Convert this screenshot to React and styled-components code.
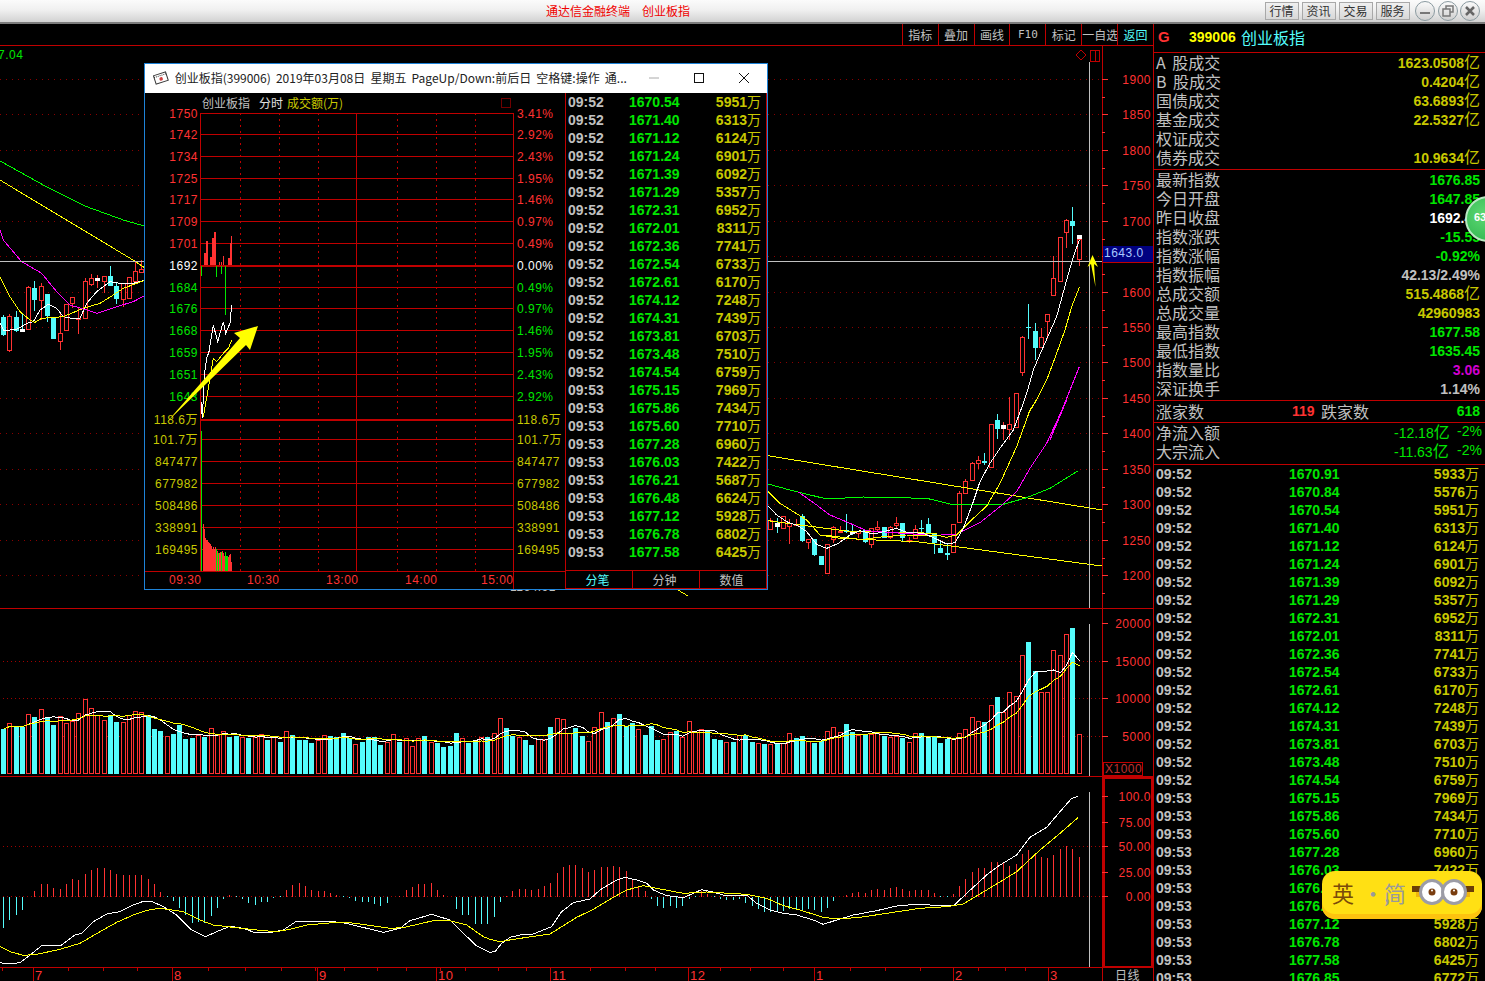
import React from "react";
import styled, { createGlobalStyle } from "styled-components";

const RED = "#FF3232";
const DARKRED = "#C00000";
const CYAN = "#54FCFC";
const GOLD = "#C8C800";
const GREEN = "#00E600";
const GREY = "#C0C0C0";
const CJK = '"Noto Sans CJK SC", "Liberation Sans", sans-serif';
const NUM = '"Liberation Sans", "Noto Sans CJK SC", sans-serif';

const Global = createGlobalStyle`
  html, body { margin: 0; padding: 0; background: #000; overflow: hidden; }
`;

// Page frame
const Shell = styled.div`
  position: relative;
  display: flex;
  flex-direction: column;
  width: 1485px;
  height: 981px;
  overflow: hidden;
  background: #000;
`;
const TitleBar = styled.header`
  display: flex;
  align-items: center;
  box-sizing: border-box;
  height: 24px;
  padding-left: 546px;
  background: linear-gradient(#fbfbfb, #f0f0f0 45%, #d2d2d2);
  border-bottom: 2px solid #7c7c7c;
`;
const AppTitle = styled.span`
  font: 12px ${CJK};
  color: #f00000;
  margin-right: ${(p) => p.$gap || 0}px;
  margin-bottom: 1px;
  white-space: nowrap;
`;
const MenuGroup = styled.div`
  display: flex;
  align-items: center;
  margin-left: auto;
  padding-right: 5px;
`;
const MenuButton = styled.div`
  box-sizing: border-box;
  width: 34px;
  height: 18px;
  margin-right: 3px;
  text-align: center;
  font: 12px/16px ${CJK};
  color: #333;
  background: linear-gradient(#f0f0f0, #d8d8d8);
  border: 1px solid #a8a8a8;
`;
const RoundButton = styled.div`
  display: flex;
  align-items: center;
  justify-content: center;
  box-sizing: border-box;
  width: 20px;
  height: 20px;
  margin-left: 2.5px;
  border-radius: 50%;
  background: linear-gradient(#fafafa, #cfcfcf);
  border: 1px solid #8a9aa0;
`;
const Body = styled.div`
  display: flex;
  flex: 1;
  min-height: 0;
`;
const ChartColumn = styled.main`
  display: flex;
  flex-direction: column;
  width: 1153px;
  flex: none;
`;
const Toolbar = styled.nav`
  display: flex;
  justify-content: flex-end;
  box-sizing: border-box;
  height: 22px;
  border-bottom: 1px solid ${DARKRED};
`;
const ToolButton = styled.div`
  box-sizing: border-box;
  width: 35.9px;
  border-left: 1px solid ${DARKRED};
  text-align: center;
  white-space: nowrap;
  font: ${(p) => (p.$latin ? '11px/21px "DejaVu Sans Mono", monospace' : `12px/21px ${CJK}`)};
  color: ${(p) => (p.$active ? CYAN : GREY)};
`;
const ChartSvg = styled.svg`
  display: block;
  flex: none;
`;
const ChartText = styled.text`
  font: ${(p) => p.$size || 12}px ${NUM};
  fill: ${(p) => p.$color || RED};
  text-anchor: ${(p) => p.$anchor || "start"};
  letter-spacing: 0.5px;
`;

// Right hand quote panel
const Side = styled.aside`
  flex: 1;
  min-width: 0;
  overflow: hidden;
  border-left: 1px solid ${DARKRED};
`;
const SideHead = styled.div`
  display: flex;
  align-items: center;
  box-sizing: border-box;
  height: 29px;
  padding: 0 0 3px 4px;
  border-bottom: 1px solid ${DARKRED};
`;
const HeadMark = styled.span`
  width: 31px;
  font: bold 15px ${NUM};
  color: ${RED};
`;
const HeadCode = styled.span`
  width: 52px;
  font: bold 14px ${NUM};
  color: #ffff00;
`;
const HeadName = styled.span`
  font: 16px ${CJK};
  color: ${CYAN};
`;
const Group = styled.section`
  padding: ${(p) => p.$top ?? 0}px 5px ${(p) => p.$bottom ?? 2}px 2px;
  border-bottom: 1px solid ${DARKRED};
`;
const QuoteRow = styled.div`
  display: flex;
  align-items: center;
  justify-content: space-between;
  height: 19px;
  white-space: nowrap;
`;
const Label = styled.span`
  font: 16px/19px ${CJK};
  color: ${GREY};
  word-spacing: 3px;
`;
const Value = styled.span`
  font: bold 14px/19px ${NUM};
  color: ${(p) => p.$color || GOLD};
`;
const Unit = styled.span`
  font: 400 16px/19px ${CJK};
`;
const CountRow = styled.div`
  display: grid;
  grid-template-columns: 136px 29px 1fr auto;
  align-items: center;
  height: 21px;
  padding-right: 5px;
  padding-left: 2px;
  border-bottom: 1px solid ${DARKRED};
`;
const FlowValue = styled.span`
  display: flex;
  justify-content: space-between;
  width: 88px;
  font: 14px/19px ${NUM};
  color: ${GREEN};
  margin-right: -2px;
`;
const TickRow = styled.div`
  display: grid;
  grid-template-columns: ${(p) => p.$cols};
  align-items: center;
  box-sizing: border-box;
  height: 18px;
  padding-bottom: 1px;
  white-space: nowrap;
  font: bold 14px/17px ${NUM};
`;
const TickTime = styled.span`
  color: ${GREY};
`;
const TickPrice = styled.span`
  color: ${GREEN};
`;
const TickVol = styled.span`
  color: ${GOLD};
  text-align: right;
`;
const TickUnit = styled.span`
  font: 400 14px/17px ${CJK};
`;
const TickList = styled.div`
  padding: 0 ${(p) => p.$right}px 0 ${(p) => p.$left}px;
`;

// Floating minute window
const Popup = styled.div`
  position: absolute;
  left: 144px;
  top: 63px;
  display: flex;
  flex-direction: column;
  box-sizing: border-box;
  width: 624px;
  height: 527px;
  background: #000;
  border: 1px solid #1E83D8;
`;
const PopupTitle = styled.div`
  display: flex;
  align-items: center;
  box-sizing: border-box;
  height: 29px;
  flex: none;
  padding: 0 0 2px 8px;
  background: #fff;
`;
const PopupCaption = styled.span`
  margin-left: 6px;
  width: 467px;
  font: 12px ${CJK};
  word-spacing: 2.5px;
  color: #222;
  white-space: nowrap;
  overflow: hidden;
`;
const PopupControl = styled.div`
  display: flex;
  align-items: center;
  justify-content: center;
  width: 46px;
  height: 27px;
`;
const PopupBody = styled.div`
  display: flex;
  flex: 1;
  min-height: 0;
`;
const PopupSide = styled.div`
  display: flex;
  flex-direction: column;
  flex: 1;
  min-width: 0;
  border-left: 1px solid ${DARKRED};
  border-right: 1px solid ${DARKRED};
  border-bottom: 1px solid ${DARKRED};
`;
const PopupTabs = styled.div`
  display: grid;
  grid-template-columns: 66px 67px 1fr;
  margin-top: auto;
  height: 17px;
  border-top: 1px solid ${DARKRED};
`;
const PopupTab = styled.div`
  box-sizing: border-box;
  padding-right: 3px;
  text-align: center;
  font: 12px/17px ${CJK};
  color: ${(p) => (p.$active ? CYAN : GREY)};
  & + & { border-left: 1px solid ${DARKRED}; }
`;

// Overlays
const Badge = styled.div`
  position: absolute;
  left: 1465px;
  top: 196px;
  box-sizing: border-box;
  width: 46px;
  height: 46px;
  padding: 13px 0 0 7px;
  border-radius: 50%;
  background: radial-gradient(circle at 40% 40%, #5ed873, #28b04a);
  border: 2px solid #b9e8c2;
  font: bold 11px ${NUM};
  color: #fff;
`;
const ImeBar = styled.div`
  position: absolute;
  left: 1322px;
  top: 871px;
  display: flex;
  align-items: center;
  box-sizing: border-box;
  width: 160px;
  height: 48px;
  padding: 0 0 6px 10px;
  border-radius: 13px;
  background: #ffe014;
  box-shadow: inset 0 -5px 0 #fdc30f;
`;
const ImeChar = styled.span`
  flex: none;
  width: ${(p) => p.$width}px;
  font: 22px ${CJK};
  color: ${(p) => p.$color};
`;

/* ---------- chart data, read off the reference ---------- */
const GRID = Array.from({ length: 15 }, (_, i) => Math.round(79 + i * 35.43));
const PRICES = Array.from({ length: 15 }, (_, i) => 1900 - i * 50);
const barLeft = (i) => Math.round(1 + 6.29 * i);

// top of each volume bar; positive = red hollow, negative = cyan solid
const VOL = [
  -387, 370, -380, -380, 343, -351, 328, -352, -375, 349, 370, 362, 340, 297, 325, 345, 361, -345, -366, 367,
  346, 334, 337, -346, -387, -393, 409, -402, -375, -417, -414, 406, -411, 385, 405, 394, -411, -407, 411, -413,
  410, 403, -419, 411, -426, 394, -405, -420, -420, -429, 420, 406, -408, -411, -399, -415, 433, -426, -411, -411,
  -435, 425, 403, -426, 415, 439, 415, -408, 427, -429, -441, -438, -399, 415, -429, -423, 411, -411, 400, 355,
  -384, -408, 410, -420, -435, 416, 416, -381, 355, 358, 400, -384, -408, 424, 382, 337, -366, 355, -342, -378,
  -370, 388, -405, -378, -420, 418, 397, -393, 412, 364, 396, 388, -390, -417, -420, 427, -426, 406, -405, -426,
  430, -432, 433, -430, 430, 400,
  -414, -408, 424, -429, -423, 393, 382, 397, -372, -396, 404, -401, 401, 400,
  -408, 412, 408, -414, 427, 400, -399, -411, -410, -429, -417, 418, 400, 388, 352, 364, -366, 316, -291, 337,
  277, 289, 166, -126, -214, 277, 277, 151, 166, 103, -84, 403,
];
const MACD = [
  983, 960, 945, 930, 891, 873, 852, 852, 865, 867, 852, 837, 840, 822, 810, 804, 804, 810, 822, 825,
  825, 825, 825, 837, 852, 876, 889, 903, 924, 945, 969, 965, 969, 948, 924, 897, 885, 889, 897, 909,
  915, 906, 906, 893, 889, 870, 855, 849, 858, 870, 873, 873, 879, 885, 889, 893, 903, 906, 906, 912,
  918, 909, 891, 888, 870, 861, 852, 852, 849, 870, 885, 891, 927, 945, 945, 972, 972, 972, 951, 905,
  887, 873, 867, 867, 870, 867, 858, 849, 819, 801, 795, 795, 804, 816, 810, 801, 801, 798, 801, 813,
  840, 858, 873, 897, 918, 924, 918, 924, 918, 897, 889, 873, 882, 889, 897, 900, 900, 897, 909, 918,
  927, 936, 936, 936, 933, 927, 930, 930, 927, 930, 936, 924, 903, 891, 885, 879, 876, 879, 870, 867,
  870, 864, 861, 867, 873, 870, 870, 870, 879, 889, 889, 882, 858, 837, 816, 804, 804, 786, 786, 789,
  798, 792, 762, 750, 762, 771, 774, 765, 747, 738, 747, 771,
];

// idx, body top, body bottom, wick top, wick bottom, kind (zoomed coords, see origin)
const CANDLES_LEFT = [
  [0, 232, 285, 225, 288, "c"], [1, 229, 329, 222, 335, "r"], [2, 232, 272, 213, 275, "c"], [3, 268, 277, 220, 277, "x"],
  [4, 142, 268, 138, 268, "r"], [5, 145, 179, 123, 213, "c"], [6, 139, 179, 130, 240, "r"], [7, 163, 228, 163, 245, "c"],
  [8, 235, 296, 235, 296, "c"], [9, 280, 302, 220, 330, "r"], [10, 193, 271, 193, 271, "r"], [11, 170, 190, 170, 205, "r"],
  [12, 234, 236, 200, 282, "r"], [13, 124, 233, 114, 233, "r"], [14, 115, 131, 102, 137, "r"], [15, 115, 124, 105, 145, "w"],
  [16, 109, 122, 109, 158, "r"], [17, 109, 137, 78, 137, "c"], [18, 138, 177, 125, 192, "c"], [19, 128, 178, 128, 200, "r"],
  [20, 112, 175, 112, 175, "r"], [21, 94, 122, 64, 130, "r"], [22, 88, 95, 60, 100, "r"],
];
const CANDLES_MID = [
  [122, 360, 386, 355, 386, "r"], [123, 368, 380, 355, 398, "x"], [124, 347, 384, 347, 384, "r"], [125, 370, 378, 357, 431, "r"],
  [126, 373, 375, 358, 378, "r"], [127, 347, 423, 342, 425, "c"], [128, 418, 425, 418, 447, "r"], [129, 418, 465, 418, 467, "c"],
  [130, 468, 495, 468, 495, "c"], [131, 431, 518, 431, 521, "r"], [132, 382, 418, 378, 429, "r"], [133, 392, 396, 378, 398, "r"],
  [134, 390, 396, 342, 398, "c"], [135, 395, 403, 375, 405, "x"], [136, 392, 398, 392, 414, "r"], [137, 390, 425, 390, 430, "c"],
  [138, 385, 433, 385, 443, "r"], [139, 380, 386, 363, 395, "r"], [140, 382, 415, 382, 415, "c"], [141, 380, 410, 378, 418, "r"],
  [142, 368, 375, 352, 385, "r"], [143, 370, 414, 370, 422, "c"], [144, 420, 423, 412, 428, "r"], [145, 388, 414, 376, 418, "r"],
  [146, 385, 388, 360, 395, "c"], [147, 373, 400, 354, 403, "c"], [148, 400, 430, 400, 461, "c"], [149, 444, 458, 420, 458, "c"],
  [150, 458, 464, 430, 480, "c"], [151, 373, 455, 373, 455, "r"], [152, 280, 367, 273, 367, "r"], [153, 244, 278, 238, 278, "r"],
  [154, 190, 240, 185, 240, "r"], [155, 180, 190, 168, 207, "r"], [156, 183, 189, 160, 195, "c"],
];
const CANDLES_TOP = [
  [157, 673, 800, 673, 800, "r"], [158, 660, 686, 642, 716, "c"], [159, 675, 686, 665, 720, "w"], [160, 673, 688, 590, 720, "r"],
  [161, 580, 680, 580, 680, "r"], [162, 411, 515, 408, 527, "r"], [163, 381, 385, 312, 416, "c"], [164, 393, 443, 370, 480, "c"],
  [165, 412, 441, 384, 441, "r"], [166, 343, 364, 343, 416, "r"], [167, 235, 285, 168, 287, "r"], [168, 112, 243, 112, 243, "r"],
  [169, 61, 95, 57, 143, "r"], [170, 63, 77, 22, 132, "c"], [171, 117, 176, 117, 197, "r"], [171, 105, 117, 105, 117, "w"],
];

// polylines as x,y pairs in zoomed coords, with the crop origin they were read from
const path3 = (ox, oy, flat) => {
  const out = [];
  for (let i = 0; i < flat.length; i += 2) out.push(`${ox + flat[i] / 3},${oy + flat[i + 1] / 3}`);
  return out.join(" ");
};
const MAIN_LINES = [
  ["#FFFFFF", path3(0, 240, [0, 250, 12, 272, 50, 268, 85, 248, 100, 245, 120, 210, 145, 193, 170, 205, 190, 230, 215, 235, 240, 235, 260, 190, 290, 155, 330, 125, 360, 130, 400, 130, 437, 120])],
  ["#FFFF00", path3(0, 240, [0, 110, 30, 170, 60, 215, 90, 240, 105, 247, 125, 235, 190, 230, 250, 205, 300, 190, 340, 165, 370, 145, 437, 120])],
  ["#FF00FF", path3(0, 240, [10, 0, 65, 65, 125, 100, 170, 155, 210, 195, 260, 210, 290, 220, 350, 200, 400, 185, 437, 165])],
  ["#FF00FF", "0,230 3.300,240"],
  ["#FFFF00", "0,180 133,260 145,268"],
  ["#00FF00", path3(0, 0, [0, 483, 130, 555, 260, 620, 370, 660, 432, 678])],
  ["#FFFF00", "768,455.7 1102,510"],
  ["#FFFF00", path3(760, 400, [24, 362, 120, 375, 260, 393, 530, 400])],
  ["#FFFF00", path3(760, 400, [190, 405, 300, 418, 470, 425, 590, 440, 1025, 498])],
  ["#00FF00", path3(760, 400, [24, 252, 90, 270, 200, 297, 310, 291, 500, 295, 575, 313, 730, 313, 800, 293, 870, 265, 955, 212])],
  ["#FF00FF", path3(760, 400, [115, 276, 170, 315, 210, 345, 270, 370, 320, 392, 400, 398, 520, 406, 590, 403, 660, 368, 720, 320, 770, 275, 810, 205, 860, 130, 920, 0]) + " " + path3(950, 200, [300, 720, 340, 620, 388, 500])],
  ["#FFFF00", path3(760, 400, [24, 275, 60, 310, 100, 335, 140, 360, 180, 405, 240, 415, 310, 418, 370, 410, 440, 405, 530, 405, 560, 412, 590, 405, 640, 355, 680, 318, 720, 250, 770, 140, 810, 30, 830, 0]) + " " + path3(950, 200, [235, 640, 265, 590, 290, 540, 320, 460, 345, 390, 365, 320, 388, 262])],
  ["#FFFFFF", path3(760, 400, [24, 318, 50, 345, 80, 365, 115, 378, 140, 395, 170, 433, 200, 445, 235, 430, 270, 405, 300, 392, 340, 402, 370, 395, 410, 385, 440, 397, 490, 400, 525, 415, 560, 432, 585, 428, 610, 385, 640, 305, 660, 245, 690, 190, 720, 145, 760, 90, 790, 10]) + " " + path3(950, 200, [230, 580, 250, 510, 280, 440, 320, 350, 350, 240, 370, 170, 388, 120])],
];
const MACD_WHITE = path3(0, 600, [0, 1088, 20, 1092, 60, 1088, 90, 1065, 125, 1037, 150, 1035, 185, 1035, 225, 1005, 245, 1000, 280, 965, 320, 942, 360, 935, 400, 915, 430, 904, 455, 904, 490, 920, 530, 945, 575, 990, 617, 1010, 650, 995, 690, 979, 730, 985, 765, 998, 810, 998, 850, 990, 890, 963, 960, 963, 1000, 965, 1040, 970, 1080, 980, 1150, 997, 1200, 985, 1230, 962, 1295, 943, 1350, 960, 1380, 990, 1430, 1038, 1470, 1057])
  + " " + path3(490, 680, [15, 815, 35, 790, 60, 772, 100, 763, 130, 762, 185, 740, 215, 695, 250, 668, 300, 657, 330, 630, 380, 600, 405, 592, 440, 600, 470, 610, 490, 630, 530, 647, 580, 653, 610, 640, 635, 629, 665, 635, 700, 645, 770, 645, 800, 670, 840, 690, 880, 700])
  + " " + path3(780, 600, [50, 945, 100, 960, 130, 973, 170, 960, 220, 945, 290, 932, 350, 918, 420, 912, 460, 916, 520, 918, 560, 880, 620, 825, 660, 795, 710, 765, 750, 712, 800, 682, 840, 635, 875, 595, 895, 589]);
const MACD_YELLOW = path3(0, 600, [0, 1040, 30, 1055, 70, 1066, 110, 1063, 180, 1048, 240, 1030, 300, 995, 350, 967, 400, 945, 440, 931, 480, 925, 550, 935, 600, 960, 640, 975, 700, 982, 780, 991, 830, 995, 870, 988, 920, 975, 1000, 968, 1050, 968, 1100, 975, 1170, 985, 1210, 983, 1300, 962, 1350, 962, 1400, 975, 1450, 1010])
  + " " + path3(490, 680, [0, 778, 30, 785, 70, 778, 180, 762, 260, 712, 310, 688, 370, 652, 410, 630, 460, 617, 500, 625, 580, 640, 650, 636, 770, 643, 830, 655, 880, 677])
  + " " + path3(780, 600, [60, 930, 130, 952, 170, 957, 240, 952, 320, 940, 420, 925, 500, 920, 550, 912, 620, 870, 710, 815, 780, 750, 840, 700, 895, 652]);

const movingAverage = (n) =>
  VOL.map((_, i) => {
    const part = VOL.slice(Math.max(0, i - n + 1), i + 1).map((v) => 521 - Math.abs(v));
    const avg = part.reduce((a, b) => a + b, 0) / part.length;
    return `${barLeft(i) + 2.5},${774 - avg / 3}`;
  }).join(" ");

const MONTHS = [[33, "7"], [172, "8"], [317, "9"], [436, "10"], [550, "11"], [688, "12"], [814, "1"], [953, "2"], [1048, "3"]];
const MINOR = [2, 68, 103, 137, 208, 245, 281, 315, 377, 344, 406, 440, 465, 498, 526, 590, 625, 655, 720, 750, 783, 850, 885, 920, 978, 1005, 1025];

function Candle({ data, oy }) {
  const [i, top, bottom, wTop, wBottom, kind] = data;
  const left = barLeft(i);
  const cx = left + 2.5;
  const y = (v) => Math.round(oy + v / 3);
  const wickColor = kind === "c" || kind === "x" ? CYAN : RED;
  const bodyTop = y(top);
  const bodyH = Math.max(1, y(bottom) - bodyTop);
  return (
    <>
      <line x1={cx} x2={cx} y1={y(wTop)} y2={y(wBottom)} stroke={wickColor} />
      {kind === "r" ? (
        <rect x={left + 0.5} y={bodyTop + 0.5} width={4} height={bodyH} fill="#000" stroke={RED} />
      ) : (
        <rect x={left} y={bodyTop} width={5} height={bodyH} fill={kind === "c" ? CYAN : "#fff"} />
      )}
    </>
  );
}

function MainChart() {
  return (
    <ChartSvg width={1153} height={935} viewBox="0 46 1153 935" shapeRendering="crispEdges">
      {/* price grid */}
      {GRID.map((y) => (
        <line key={y} x1={0} x2={1102} y1={y + 0.5} y2={y + 0.5} stroke="#8A0000" strokeDasharray="1 5" />
      ))}
      {[661, 698, 736, 846, 896].map((y) => (
        <line key={y} x1={3} x2={1102} y1={y + 0.5} y2={y + 0.5} stroke="#A00000" strokeDasharray="1 3" />
      ))}
      <ChartText x={-2} y={59} $color={GREEN} $size={12}>7.04</ChartText>

      {CANDLES_LEFT.map((c) => <Candle key={c[0]} data={c} oy={240} />)}
      {CANDLES_MID.map((c) => <Candle key={c[0]} data={c} oy={400} />)}
      {CANDLES_TOP.map((c, k) => <Candle key={k} data={c} oy={200} />)}
      {MAIN_LINES.map(([color, pts], k) => (
        <polyline key={k} points={pts} fill="none" stroke={color} />
      ))}
      <polyline points="678,590 688,596" fill="none" stroke="#FFFF00" />
      <ChartText x={510} y={591} $color={GREY}>1164.91</ChartText>

      {/* volume */}
      {VOL.map((v, i) => {
        const top = Math.round(600 + Math.abs(v) / 3);
        return v < 0 ? (
          <rect key={i} x={barLeft(i)} y={top} width={5} height={774 - top} fill={CYAN} />
        ) : (
          <rect key={i} x={barLeft(i) + 0.5} y={top + 0.5} width={4} height={773 - top} fill="#000" stroke={RED} />
        );
      })}
      <polyline points={movingAverage(5)} fill="none" stroke="#FFFFFF" />
      <polyline points={movingAverage(10)} fill="none" stroke="#FFFF00" />

      {/* macd */}
      {MACD.map((y, i) => {
        const end = 600 + y / 3;
        const x = barLeft(i) + 2.5;
        return <line key={i} x1={x} x2={x} y1={896.5} y2={end} stroke={y < 889 ? RED : CYAN} />;
      })}
      <polyline points={MACD_WHITE} fill="none" stroke="#FFFFFF" />
      <polyline points={MACD_YELLOW} fill="none" stroke="#FFFF00" />

      {/* crosshair */}
      <line x1={0} x2={1102} y1={261.5} y2={261.5} stroke={GREY} />
      <line x1={1089.5} x2={1089.5} y1={62} y2={608} stroke={GREY} />
      <line x1={1089.5} x2={1089.5} y1={624} y2={776} stroke={GREY} />
      <line x1={1089.5} x2={1089.5} y1={792} y2={967} stroke={GREY} />
      <polygon points="1092.5,255 1098,267 1094,264 1095.5,287 1091,264 1087.5,267" fill="#FFFF00" shapeRendering="auto" />

      {/* panel rules */}
      <line x1={0} x2={1153} y1={608.5} y2={608.5} stroke={DARKRED} />
      <line x1={0} x2={1153} y1={776.5} y2={776.5} stroke={DARKRED} />
      <line x1={0} x2={1153} y1={967.5} y2={967.5} stroke={DARKRED} />
      <line x1={1102.5} x2={1102.5} y1={46} y2={981} stroke={DARKRED} />
      <rect x={1103.5} y={777.5} width={48} height={189} fill="none" stroke={DARKRED} strokeWidth={2} />

      {/* right axis */}
      {GRID.map((y, i) => (
        <g key={y}>
          <line x1={1102} x2={1108} y1={y + 0.5} y2={y + 0.5} stroke={RED} />
          <line x1={1102} x2={1105} y1={y + 18.5} y2={y + 18.5} stroke={RED} />
          <ChartText x={1151} y={y + 5} $anchor="end">{PRICES[i]}</ChartText>
        </g>
      ))}
      <path d="M1081 50l5 5-5 5-5-5zM1090.500 50.500h9v11h-9zM1095.500 50.500v11" fill="none" stroke={DARKRED} />
      <rect x={1103} y={246} width={50} height={16} fill="#000080" />
      <line x1={1103} x2={1153} y1={262.5} y2={262.5} stroke={DARKRED} />
      <ChartText x={1104} y={257} $color="#A8C8FF">1643.0</ChartText>

      {[[623, "20000"], [661, "15000"], [698, "10000"], [736, "5000"]].map(([y, t]) => (
        <g key={y}>
          <line x1={1102} x2={1108} y1={y + 0.5} y2={y + 0.5} stroke={RED} />
          <ChartText x={1151} y={y + 5} $anchor="end">{t}</ChartText>
        </g>
      ))}
      <rect x={1103.5} y={762.5} width={39} height={13} fill="#000" stroke={DARKRED} />
      <ChartText x={1105} y={773} $color="#C03030">X1000</ChartText>
      {[[796, "100.0"], [822, "75.00"], [846, "50.00"], [872, "25.00"], [896, "0.00"]].map(([y, t]) => (
        <g key={y}>
          <line x1={1102} x2={1108} y1={y + 0.5} y2={y + 0.5} stroke={RED} />
          <ChartText x={1151} y={y + 5} $anchor="end">{t}</ChartText>
        </g>
      ))}

      {/* date axis */}
      {MINOR.map((x) => (
        <line key={x} x1={x + 0.5} x2={x + 0.5} y1={967} y2={971} stroke={DARKRED} />
      ))}
      {MONTHS.map(([x, t]) => (
        <g key={x}>
          <line x1={x + 0.5} x2={x + 0.5} y1={967} y2={981} stroke={DARKRED} />
          <ChartText x={x + 2} y={980} $size={13}>{t}</ChartText>
        </g>
      ))}
      <ChartText x={1115} y={980} $size={12} $color={GREY} style={{ fontFamily: CJK }}>日线</ChartText>
    </ChartSvg>
  );
}

/* ---------- minute window ---------- */
const MINI_ROWS = [
  [113, "1750", RED, "3.41%"], [134, "1742", RED, "2.92%"], [156, "1734", RED, "2.43%"], [178, "1725", RED, "1.95%"],
  [199, "1717", RED, "1.46%"], [221, "1709", RED, "0.97%"], [243, "1701", RED, "0.49%"], [265, "1692", "#FFFFFF", "0.00%"],
  [287, "1684", GREEN, "0.49%"], [308, "1676", GREEN, "0.97%"], [330, "1668", GREEN, "1.46%"], [352, "1659", GREEN, "1.95%"],
  [374, "1651", GREEN, "2.43%"], [396, "1643", GREEN, "2.92%"], [419, "118.6万", GOLD, "118.6万"], [439, "101.7万", GOLD, "101.7万"],
  [461, "847477", GOLD, "847477"], [483, "677982", GOLD, "677982"], [505, "508486", GOLD, "508486"],
  [527, "338991", GOLD, "338991"], [549, "169495", GOLD, "169495"],
];
const MINI_UP = [[204, 253], [206, 241], [207, 250], [210, 257], [212, 238], [214, 232], [219, 262], [221, 262], [223, 256], [228, 258], [230, 243], [231, 236]];
const MINI_DOWN = [[201, 276], [216, 277], [221, 274], [225, 315]];
const MINI_VOL = [
  [203, 524, 0], [204, 529, 0], [205, 538, 0], [206, 540, 0], [207, 540, 0], [208, 542, 0], [209, 543, 0], [210, 544, 0],
  [211, 546, 0], [212, 549, 0], [213, 547, 0], [214, 549, 0], [215, 547, 0], [216, 549, 1], [217, 551, 0], [218, 553, 1],
  [219, 553, 0], [220, 552, 0], [221, 552, 1], [222, 551, 0], [223, 553, 0], [224, 556, 0], [225, 552, 1], [226, 556, 1],
  [227, 556, 1], [228, 557, 0], [229, 555, 0], [230, 554, 0], [231, 562, 0],
];

function MiniChart() {
  return (
    <ChartSvg width={420} height={496} viewBox="145 93 420 496" shapeRendering="crispEdges">
      <ChartText x={202} y={108} $color={GREY} style={{ fontFamily: CJK, letterSpacing: 0 }}>创业板指</ChartText>
      <ChartText x={259} y={108} $color="#E0E0E0" style={{ fontFamily: CJK, letterSpacing: 0 }}>分时</ChartText>
      <ChartText x={287} y={108} $color={GOLD} style={{ fontFamily: CJK, letterSpacing: 0 }}>成交额(万)</ChartText>
      <rect x={501.5} y={98.5} width={9} height={9} fill="none" stroke="#700000" />

      {MINI_ROWS.map(([y, left, color, right]) => {
        const thick = y === 265 || y === 419;
        return (
          <g key={y}>
            <line x1={201} x2={513} y1={y + 0.5} y2={y + 0.5} stroke={DARKRED} strokeWidth={thick ? 2 : 1} />
            <ChartText x={198} y={y + 5} $color={color} $anchor="end">{left}</ChartText>
            <ChartText x={517} y={y + 5} $color={color}>{right}</ChartText>
          </g>
        );
      })}
      {[240, 279, 318, 397, 436, 475].map((x) => (
        <line key={x} x1={x + 0.5} x2={x + 0.5} y1={113} y2={571} stroke="#C00000" strokeDasharray="2 4" />
      ))}
      <rect x={200.5} y={113.5} width={313} height={458} fill="none" stroke={DARKRED} />
      <line x1={356.5} x2={356.5} y1={113} y2={571} stroke={DARKRED} />
      <line x1={145} x2={565} y1={571.5} y2={571.5} stroke={DARKRED} />
      <line x1={513.5} x2={513.5} y1={571} y2={589} stroke={DARKRED} />

      {MINI_UP.map(([x, y]) => (
        <line key={x} x1={x + 0.5} x2={x + 0.5} y1={265} y2={y} stroke={RED} strokeWidth={x % 2 ? 1 : 2} />
      ))}
      {MINI_DOWN.map(([x, y]) => (
        <line key={x} x1={x + 0.5} x2={x + 0.5} y1={266} y2={y} stroke={GREEN} />
      ))}
      <polyline points={path3(145, 225, [168, 530, 172, 580, 178, 450, 185, 400, 192, 380, 205, 300, 218, 350, 235, 290, 242, 325, 255, 295, 260, 240])} fill="none" stroke="#FFFFFF" />
      <polyline points={path3(145, 225, [175, 575, 190, 490, 205, 400, 215, 410, 235, 385, 250, 370, 260, 345])} fill="none" stroke="#FFFF00" />
      <line x1={201.5} x2={201.5} y1={431} y2={571} stroke={GREEN} />
      {MINI_VOL.map(([x, y, down]) => (
        <line key={x} x1={x + 0.5} x2={x + 0.5} y1={y} y2={571} stroke={down ? GREEN : RED} />
      ))}
      <polygon points="167,422 240,338 234,333 258,326 250,350 246,345" fill="#FFFF00" shapeRendering="auto" />

      {[[169, "09:30"], [247, "10:30"], [326, "13:00"], [405, "14:00"], [481, "15:00"]].map(([x, t]) => (
        <ChartText key={t} x={x} y={584}>{t}</ChartText>
      ))}
    </ChartSvg>
  );
}

const SIDE_TICKS = [
  ["09:52", "1670.91", 5933], ["09:52", "1670.84", 5576], ["09:52", "1670.54", 5951], ["09:52", "1671.40", 6313],
  ["09:52", "1671.12", 6124], ["09:52", "1671.24", 6901], ["09:52", "1671.39", 6092], ["09:52", "1671.29", 5357],
  ["09:52", "1672.31", 6952], ["09:52", "1672.01", 8311], ["09:52", "1672.36", 7741], ["09:52", "1672.54", 6733],
  ["09:52", "1672.61", 6170], ["09:52", "1674.12", 7248], ["09:52", "1674.31", 7439], ["09:52", "1673.81", 6703],
  ["09:52", "1673.48", 7510], ["09:52", "1674.54", 6759], ["09:53", "1675.15", 7969], ["09:53", "1675.86", 7434],
  ["09:53", "1675.60", 7710], ["09:53", "1677.28", 6960], ["09:53", "1676.03", 7422], ["09:53", "1676.21", 5687],
  ["09:53", "1676.48", 6624], ["09:53", "1677.12", 5928], ["09:53", "1676.78", 6802], ["09:53", "1677.58", 6425],
  ["09:53", "1676.85", 6772],
];

const QUOTES_A = [
  ["A 股成交", "1623.0508", GOLD, "亿"], ["B 股成交", "0.4204", GOLD, "亿"], ["国债成交", "63.6893", GOLD, "亿"],
  ["基金成交", "22.5327", GOLD, "亿"], ["权证成交", "", GOLD, ""], ["债券成交", "10.9634", GOLD, "亿"],
];
const QUOTES_B = [
  ["最新指数", "1676.85", GREEN], ["今日开盘", "1647.85", GREEN], ["昨日收盘", "1692.40", "#FFFFFF"], ["指数涨跌", "-15.55", GREEN],
  ["指数涨幅", "-0.92%", GREEN], ["指数振幅", "42.13/2.49%", GREY], ["总成交额", "515.4868", GOLD, "亿"], ["总成交量", "42960983", GOLD],
  ["最高指数", "1677.58", GREEN], ["最低指数", "1635.45", GREEN], ["指数量比", "3.06", "#D000D0"], ["深证换手", "1.14%", GREY],
];

function Ticks({ rows, cols, left, right }) {
  return (
    <TickList $left={left} $right={right}>
      {rows.map(([time, price, vol], i) => (
        <TickRow key={i} $cols={cols}>
          <TickTime>{time}</TickTime>
          <TickPrice>{price}</TickPrice>
          <TickVol>{vol}<TickUnit>万</TickUnit></TickVol>
        </TickRow>
      ))}
    </TickList>
  );
}

function App() {
  return (
    <Shell>
      <Global />
      <TitleBar>
        <AppTitle $gap={12}>通达信金融终端</AppTitle>
        <AppTitle>创业板指</AppTitle>
        <MenuGroup>
          {["行情", "资讯", "交易", "服务"].map((t) => <MenuButton key={t}>{t}</MenuButton>)}
          <RoundButton>
            <svg width="12" height="12" viewBox="0 0 12 12"><path d="M1 8h10" stroke="#777" strokeWidth="2" /></svg>
          </RoundButton>
          <RoundButton>
            <svg width="12" height="12" viewBox="0 0 12 12" fill="none" stroke="#777" strokeWidth="1.5"><path d="M4 4V1h7v6H8M1 4h7v7H1z" /></svg>
          </RoundButton>
          <RoundButton>
            <svg width="12" height="12" viewBox="0 0 12 12"><path d="M2 2l8 8M10 2l-8 8" stroke="#666" strokeWidth="2.5" /></svg>
          </RoundButton>
        </MenuGroup>
      </TitleBar>

      <Body>
        <ChartColumn>
          <Toolbar>
            <ToolButton>指标</ToolButton>
            <ToolButton>叠加</ToolButton>
            <ToolButton>画线</ToolButton>
            <ToolButton $latin>F10</ToolButton>
            <ToolButton>标记</ToolButton>
            <ToolButton>一自选</ToolButton>
            <ToolButton $active>返回</ToolButton>
          </Toolbar>
          <MainChart />
        </ChartColumn>

        <Side>
          <SideHead>
            <HeadMark>G</HeadMark>
            <HeadCode>399006</HeadCode>
            <HeadName>创业板指</HeadName>
          </SideHead>
          <Group>
            {QUOTES_A.map(([label, value, color, unit]) => (
              <QuoteRow key={label}>
                <Label>{label}</Label>
                <Value $color={color}>{value}<Unit>{unit}</Unit></Value>
              </QuoteRow>
            ))}
          </Group>
          <Group>
            {QUOTES_B.map(([label, value, color, unit]) => (
              <QuoteRow key={label}>
                <Label>{label}</Label>
                <Value $color={color}>{value}<Unit>{unit}</Unit></Value>
              </QuoteRow>
            ))}
          </Group>
          <CountRow>
            <Label>涨家数</Label>
            <Value $color={RED}>119</Value>
            <Label>跌家数</Label>
            <Value $color={GREEN}>618</Value>
          </CountRow>
          <Group $bottom={3}>
            <QuoteRow>
              <Label>净流入额</Label>
              <FlowValue><span>-12.18<Unit>亿</Unit></span><span>-2%</span></FlowValue>
            </QuoteRow>
            <QuoteRow>
              <Label>大宗流入</Label>
              <FlowValue><span>-11.63<Unit>亿</Unit></span><span>-2%</span></FlowValue>
            </QuoteRow>
          </Group>
          <Ticks rows={SIDE_TICKS} cols="133px 1fr auto" left={2} right={6} />
        </Side>
      </Body>

      <Popup>
        <PopupTitle>
          <svg width="16" height="14" viewBox="0 0 16 14">
            <g transform="rotate(-18 8 7)">
              <rect x="1.5" y="2.5" width="13" height="9" fill="#fff" stroke="#333" />
              <path d="M1.5 4.500h13" stroke="#333" strokeDasharray="1 1" />
              <circle cx="8" cy="8" r="1.8" fill="#d04040" />
            </g>
          </svg>
          <PopupCaption>创业板指(399006) 2019年03月08日 星期五 PageUp/Down:前后日 空格键:操作 通...</PopupCaption>
          <PopupControl>
            <svg width="10" height="10" viewBox="0 0 10 10"><path d="M0 5h10" stroke="#aaa" /></svg>
          </PopupControl>
          <PopupControl>
            <svg width="10" height="10" viewBox="0 0 10 10"><rect x=".5" y=".5" width="9" height="9" fill="none" stroke="#111" /></svg>
          </PopupControl>
          <PopupControl>
            <svg width="10" height="10" viewBox="0 0 10 10"><path d="M0 0l10 10M10 0L0 10" stroke="#111" /></svg>
          </PopupControl>
        </PopupTitle>
        <PopupBody>
          <MiniChart />
          <PopupSide>
            <Ticks rows={SIDE_TICKS.slice(2, 28)} cols="61px 1fr auto" left={2} right={5} />
            <PopupTabs>
              <PopupTab $active>分笔</PopupTab>
              <PopupTab>分钟</PopupTab>
              <PopupTab>数值</PopupTab>
            </PopupTabs>
          </PopupSide>
        </PopupBody>
      </Popup>

      <Badge>63</Badge>

      <ImeBar>
        <ImeChar $color="#7A4A0A" $width={30}>英</ImeChar>
        <ImeChar $color="#9A9A9A" $width={22}>·,</ImeChar>
        <ImeChar $color="#9A9A9A" $width={28}>简</ImeChar>
        <svg width="62" height="32" viewBox="0 0 62 32">
          <rect x="0" y="10" width="62" height="6" fill="#6B3E06" />
          <path d="M4 16h54v5H4z" fill="#f0b40c" />
          <circle cx="20" cy="16" r="11.5" fill="#fff" stroke="#9c9ca6" strokeWidth="3" />
          <circle cx="42" cy="16" r="11.5" fill="#fff" stroke="#9c9ca6" strokeWidth="3" />
          <circle cx="20" cy="16" r="3.5" fill="#7A3E10" />
          <circle cx="42" cy="16" r="3.5" fill="#7A3E10" />
          <circle cx="20" cy="14.5" r="1" fill="#fff" />
          <circle cx="42" cy="14.5" r="1" fill="#fff" />
        </svg>
      </ImeBar>
    </Shell>
  );
}

export default App;
